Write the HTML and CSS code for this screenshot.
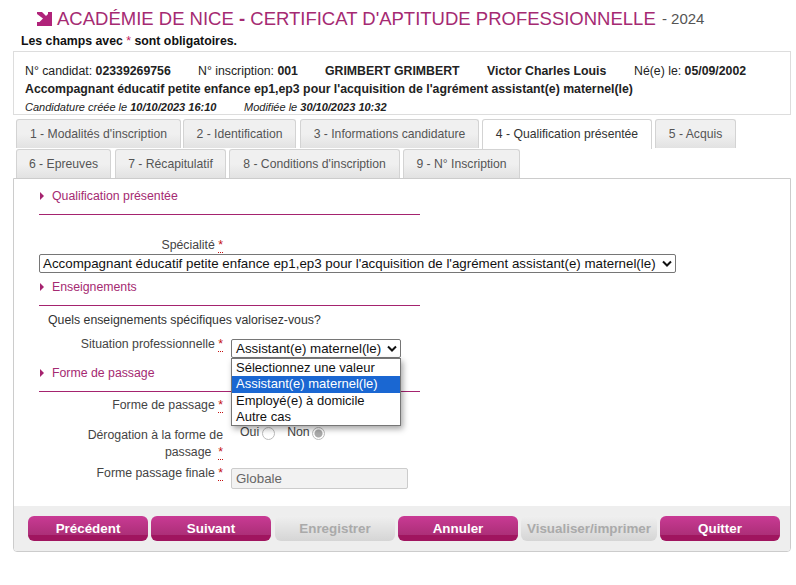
FILE: index.html
```html
<!DOCTYPE html>
<html lang="fr">
<head>
<meta charset="utf-8">
<title>Académie de Nice</title>
<link rel="stylesheet" href="styles.css">
</head>
<body>
<div class="page">
  <h1 class="title">
    <svg class="title-icon" width="15" height="14" viewBox="0 0 15 14"><path d="M0 0H5L9 4L11 2V0H15V14H0V10H2.500L6 6.500L0 2Z" fill="#b0237a"/></svg>
    <span class="t-main">ACADÉMIE DE NICE <b>-</b> CERTIFICAT D'APTITUDE PROFESSIONNELLE</span><span class="t-year"> - 2024</span>
  </h1>
  <p class="required">Les champs avec <span class="star">*</span> sont obligatoires.</p>
  <div class="info">
    <div class="info-line">
      <span class="c1">N° candidat: <b>02339269756</b></span>
      <span class="c2">N° inscription: <b>001</b></span>
      <span class="c3"><b>GRIMBERT GRIMBERT</b></span>
      <span class="c4"><b>Victor Charles Louis</b></span>
      <span>Né(e) le: <b>05/09/2002</b></span>
    </div>
    <div class="info-line2"><b>Accompagnant éducatif petite enfance ep1,ep3 pour l'acquisition de l'agrément assistant(e) maternel(le)</b></div>
    <div class="info-line3"><span class="c5">Candidature créée le <b>10/10/2023 16:10</b></span><span>Modifiée le <b>30/10/2023 10:32</b></span></div>
  </div>
  <div class="tabs first">
    <a class="tab w1">1 - Modalités d'inscription</a>
    <a class="tab w2">2 - Identification</a>
    <a class="tab w3">3 - Informations candidature</a>
    <a class="tab w4 active">4 - Qualification présentée</a>
    <a class="tab w5">5 - Acquis</a>
  </div>
  <div class="tabs">
    <a class="tab w6">6 - Epreuves</a>
    <a class="tab w7">7 - Récapitulatif</a>
    <a class="tab w8">8 - Conditions d'inscription</a>
    <a class="tab w9">9 - N° Inscription</a>
  </div>
  <div class="panel">
    <div class="panel-body">
      <div class="section s1"><span class="arrow"></span>Qualification présentée</div>
      <div class="label-only">Spécialité <span class="req">*</span></div>
      <div class="fake-select wide"><span>Accompagnant éducatif petite enfance ep1,ep3 pour l'acquisition de l'agrément assistant(e) maternel(le)</span><svg width="10" height="7" viewBox="0 0 10 7"><path d="M1 1.500L5 5.500L9 1.500" fill="none" stroke="#111" stroke-width="2"/></svg></div>
      <div class="section s2"><span class="arrow"></span>Enseignements</div>
      <p class="question">Quels enseignements spécifiques valorisez-vous?</p>
      <div class="row r-situation">
        <label class="lab up">Situation professionnelle <span class="req">*</span></label>
        <div class="select-wrap">
          <div class="fake-select small"><span>Assistant(e) maternel(le)</span><svg width="10" height="7" viewBox="0 0 10 7"><path d="M1 1.500L5 5.500L9 1.500" fill="none" stroke="#111" stroke-width="2"/></svg></div>
          <ul class="dropdown">
            <li>Sélectionnez une valeur</li>
            <li class="sel">Assistant(e) maternel(le)</li>
            <li>Employé(e) à domicile</li>
            <li>Autre cas</li>
          </ul>
        </div>
      </div>
      <div class="section s3"><span class="arrow"></span>Forme de passage</div>
      <div class="row r-forme"><label class="lab">Forme de passage <span class="req">*</span></label></div>
      <div class="row r-derog">
        <label class="lab two">Dérogation à la forme de<br>passage &nbsp;<span class="req">*</span></label>
        <div class="radios"><span>Oui</span><span class="radio"></span><span class="non">Non</span><span class="radio on"></span></div>
      </div>
      <div class="row r-finale">
        <label class="lab">Forme passage finale <span class="req">*</span></label>
        <div class="ro-input">Globale</div>
      </div>
    </div>
    <div class="actions">
      <a class="btn">Précédent</a>
      <a class="btn">Suivant</a>
      <a class="btn off enr">Enregistrer</a>
      <a class="btn">Annuler</a>
      <a class="btn off vis">Visualiser/imprimer</a>
      <a class="btn">Quitter</a>
    </div>
  </div>
</div>
</body>
</html>
```
FILE: styles.css
```css
* { box-sizing: border-box; }
html, body { margin: 0; padding: 0; background: #fff; }
body { font-family: "Liberation Sans", Arial, sans-serif; font-size: 12.3px; color: #444; }
.page { width: 796px; height: 585px; padding: 9px 5px 0 13px; overflow: hidden; }
.title { margin: 0 0 0 24px; height: 19px; display: flex; align-items: center; font-size: 18.500px; line-height: 19px; font-weight: normal; white-space: pre; color: #a52a72; }
.title-icon { margin: 0 5px 0 0; flex: none; }
.t-main b { font-weight: bold; }
.t-year { margin-left: 2px; font-size: 15px; color: #555; }
.required { margin: 7px 0 3px 8px; font-size: 12.300px; line-height: 13px; font-weight: bold; color: #111; }
.star { color: #c2185b; font-weight: normal; }
.info { height: 64px; border: 1px solid #ddd; padding: 12px 11px 0; color: #222; white-space: nowrap; }
.info-line { display: flex; line-height: 14px; }
.c1 { width: 173px; }
.c2 { width: 127px; }
.c3 { width: 162px; }
.c4 { width: 147px; }
.info-line2 { margin-top: 4px; line-height: 14px; font-weight: bold; }
.info-line3 { margin-top: 5px; line-height: 13px; font-size: 11px; font-style: italic; }
.c5 { display: inline-block; width: 219px; }
.tabs { display: flex; padding-left: 3px; gap: 2px; height: 30px; }
.first { margin-top: 4px; }
.tab { height: 29px; border: 1px solid #d3d3d3; border-bottom: 0; border-radius: 3px 3px 0 0; background: linear-gradient(#f0f0f0, #f0f0f0 50%, #e2e2e2); color: #555; text-align: center; line-height: 28px; font-size: 12.200px; white-space: nowrap; }
.tab.active { background: #fff; color: #333; height: 30px; position: relative; z-index: 1; }
.w1 { width: 165px; } .w2 { width: 113px; margin-right: 2px; } .w3 { width: 179px; margin-right: 1px; } .w4 { width: 170px; margin-right: 1px; } .w5 { width: 81px; }
.w6 { width: 95px; margin-right: 2px; } .w7 { width: 111px; margin-right: 1px; } .w8 { width: 171px; margin-right: 1px; } .w9 { width: 117px; }
.panel { margin-top: -1px; height: 374px; border: 1px solid #ccc; border-radius: 0 0 4px 4px; display: flex; flex-direction: column; }
.panel-body { flex: 1; padding: 0 0 0 25px; position: relative; }
.section { width: 381px; border-bottom: 1px solid #a5236f; color: #a52a72; display: flex; align-items: center; }
.arrow { width: 0; height: 0; border-left: 4px solid #a5236f; border-top: 4px solid transparent; border-bottom: 4px solid transparent; margin: 0 8px 0 1px; }
.s1 { height: 36px; padding-bottom: 2px; }
.s2 { height: 33px; padding-bottom: 5px; }
.s3 { height: 34px; padding-bottom: 4px; }
.label-only { width: 184px; margin-top: 23px; text-align: right; line-height: 15px; }
.req { color: #c41010; border-bottom: 1px dotted #c41010; }
.fake-select { display: flex; align-items: center; justify-content: space-between; height: 19px; border: 1px solid #767676; border-radius: 2px; background: #fff; color: #111; font-size: 13.330px; padding: 0 3px; white-space: nowrap; }
.wide { width: 637px; margin-top: 1px; }
.small { width: 170px; padding-left: 4px; }
.question { margin: 7px 0 0 9px; line-height: 14px; color: #333; }
.row { display: flex; align-items: flex-start; }
.lab { width: 184px; margin-right: 8px; text-align: right; line-height: 15px; flex: none; }
.up { margin-top: -2px; }
.r-situation { margin-top: 12px; height: 19px; }
.select-wrap { position: relative; }
.dropdown { position: absolute; top: 19px; left: 0; width: 170px; margin: 0; padding: 1px 0 0; list-style: none; background: #fff; border: 1px solid #767676; box-shadow: 2px 3px 6px rgba(0,0,0,.35); font-size: 13px; color: #111; z-index: 5; }
.dropdown li { height: 16.250px; line-height: 16px; padding-left: 4px; white-space: nowrap; }
.dropdown .sel { background: #1a67d2; color: #fff; }
.r-forme { margin-top: 6px; height: 26px; }
.r-derog { height: 35px; }
.two { line-height: 17px; margin-top: 3px; }
.radios { display: flex; align-items: center; padding: 1px 0 0 9px; height: 15px; color: #444; }
.radio { width: 13px; height: 13px; border: 1px solid #bbb; border-radius: 50%; background: #fff; margin: 2px 0 0 3px; }
.radio.on { background: radial-gradient(circle, #aaa 0 3.500px, #fff 4.500px); margin-left: 2px; }
.non { margin-left: 12px; }
.r-finale { padding-top: 11px; height: 33px; }
.r-finale .lab { margin-top: -4px; }
.ro-input { width: 177px; height: 21px; margin-top: -2px; border: 1px solid #ccc; border-radius: 2px; background: #f2f2f2; font-size: 13.330px; line-height: 19px; padding-left: 4px; color: #666; }
.actions { height: 45px; background: #eee; display: flex; padding: 10px 0 0 14px; border-radius: 0 0 3px 3px; }
.btn { width: 120px; height: 25px; margin-right: 3px; border-radius: 6px; background: linear-gradient(#c93a94, #ac2f78 76%, #a0155f 76%); color: #fff; font-size: 13.400px; font-weight: bold; text-align: center; line-height: 25px; }
.btn.off { background: linear-gradient(#efefef, #d5d5d5); color: #aaa; }
.enr { margin-left: 1px; }
.btn.vis { width: 136px; white-space: nowrap; }
```
